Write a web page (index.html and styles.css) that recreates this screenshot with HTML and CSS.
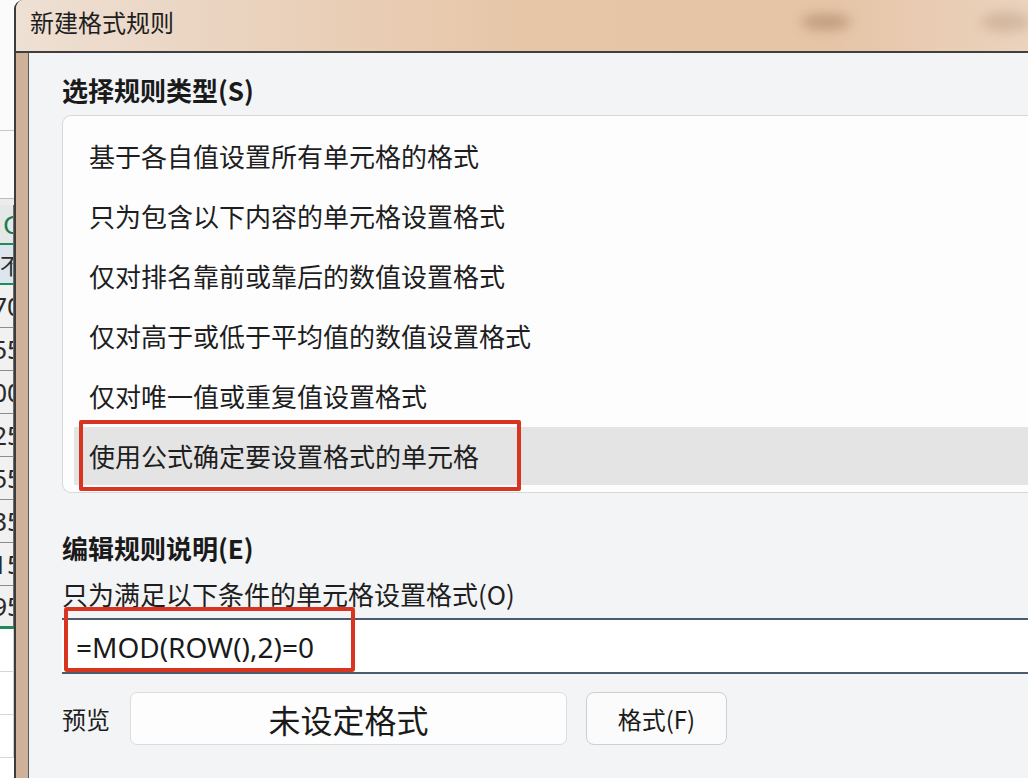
FILE: index.html
```html
<!DOCTYPE html>
<html lang="zh-CN">
<head>
<meta charset="utf-8">
<title>新建格式规则</title>
<link rel="stylesheet" href="styles.css">
</head>
<body>
<div class="screen">
  <div class="sheet">
    <div class="sheet-blank b1"></div>
    <div class="sheet-blank b2"></div>
    <div class="sheet-blank b3"></div>
    <div class="cell head"><span>G</span></div>
    <div class="cell sel"><span>不</span></div>
    <div class="cell"><span>70</span></div>
    <div class="cell"><span>55</span></div>
    <div class="cell"><span>00</span></div>
    <div class="cell"><span>25</span></div>
    <div class="cell"><span>55</span></div>
    <div class="cell"><span>35</span></div>
    <div class="cell"><span>15</span></div>
    <div class="cell last"><span>95</span></div>
    <div class="cell empty"></div>
    <div class="cell empty"></div>
    <div class="cell empty"></div>
  </div>
  <div class="window">
    <div class="titlebar">
      <span class="title">新建格式规则</span>
      <span class="blur blur1"></span>
      <span class="blur blur2"></span>
    </div>
    <div class="frame">
      <div class="dialog">
        <div class="section-title">选择规则类型(S)</div>
        <div class="rule-list">
          <div class="rule">基于各自值设置所有单元格的格式</div>
          <div class="rule">只为包含以下内容的单元格设置格式</div>
          <div class="rule">仅对排名靠前或靠后的数值设置格式</div>
          <div class="rule">仅对高于或低于平均值的数值设置格式</div>
          <div class="rule">仅对唯一值或重复值设置格式</div>
          <div class="rule selected"><span class="mark">使用公式确定要设置格式的单元格</span></div>
        </div>
        <div class="section-title second">编辑规则说明(E)</div>
        <div class="label">只为满足以下条件的单元格设置格式(O)</div>
        <div class="formula">
          <span class="formula-text">=MOD(ROW(),2)=0</span>
          <span class="formula-mark"></span>
        </div>
        <div class="preview-row">
          <span class="preview-label">预览</span>
          <div class="preview-box">未设定格式</div>
          <button class="fmt-btn">格式(F)</button>
        </div>
      </div>
    </div>
  </div>
</div>
</body>
</html>
```

FILE: styles.css
```css
* { box-sizing: border-box; }
html, body {
  margin: 0;
  padding: 0;
  width: 1028px;
  height: 778px;
  overflow: hidden;
  background: #ffffff;
  font-family: "Noto Sans CJK SC", "Noto Sans", sans-serif;
  color: #1a1a1a;
}
.screen {
  display: flex;
  width: 1028px;
  height: 778px;
}

/* spreadsheet fragment on the far left */
.sheet {
  width: 14px;
  flex: none;
  display: flex;
  flex-direction: column;
  background: #ffffff;
  overflow: hidden;
}
.sheet-blank { border-bottom: 1px solid #c9c9c9; background: #fbfbfb; }
.sheet-blank.b1 { height: 131px; }
.sheet-blank.b2 { height: 68px; border-bottom-color: #bdbdbd; }
.sheet-blank.b3 { height: 6px; border-bottom: none; background: #ececec; }
.cell {
  height: 43px;
  display: flex;
  align-items: center;
  justify-content: flex-end;
  border-bottom: 1px solid #8c8c8c;
  border-right: 1px solid #6c6c6c;
  background: #f1f1f1;
  font-family: "Noto Sans", sans-serif;
  font-size: 26px;
  color: #2a2a2a;
  overflow: hidden;
}
.cell span { margin-right: -9px; white-space: nowrap; }
.cell.head {
  height: 40px;
  background: #e4e8e6;
  color: #1e7a4d;
  border-bottom: 2px solid #1f8a5a;
}
.cell.sel {
  height: 40px;
  background: #dce6ee;
  font-family: "Noto Sans CJK SC", sans-serif;
  font-size: 22px;
  border-bottom: 2px solid #1f8a5a;
}
.cell.last { border-bottom: 3px solid #1f8a5a; }
.cell.empty { background: #ffffff; border-bottom-color: #d6d6d6; border-right-color: #cfcfcf; }

/* dialog window */
.window {
  flex: 1;
  display: flex;
  flex-direction: column;
  border-left: 2px solid #3b3b3b;
  border-top-left-radius: 9px;
  background: #d4b9a2;
  overflow: hidden;
}
.titlebar {
  height: 53px;
  flex: none;
  position: relative;
  display: flex;
  align-items: center;
  padding-left: 14px;
  padding-bottom: 8px;
  background: linear-gradient(90deg, #eee0d4 0%, #ead3bf 22%, #e7c6a8 50%, #e6c4a6 80%, #ebd3be 100%);
  border-bottom: 2px solid #3f3f3f;
}
.title {
  font-size: 24px;
  color: #1e1e1e;
}
.blur {
  position: absolute;
  border-radius: 50%;
  filter: blur(6px);
}
.blur1 { left: 785px; top: 14px; width: 50px; height: 16px; background: rgba(150, 110, 80, 0.45); }
.blur2 { left: 965px; top: 12px; width: 50px; height: 20px; background: rgba(170, 135, 110, 0.35); }

.frame {
  flex: 1;
  display: flex;
  padding-left: 12px;
  background: linear-gradient(90deg, #cfb199 0%, #dcc5b2 50%, #cdb09a 100%);
}
.dialog {
  flex: 1;
  background: #f3f4f6;
  border-left: 1px solid #555a60;
  padding: 19px 0 0 33px;
  display: flex;
  flex-direction: column;
}
.section-title {
  font-size: 26px;
  font-weight: 700;
  line-height: 36px;
  height: 36px;
  color: #1a1a1a;
}
.rule-list {
  margin-top: 7px;
  height: 378px;
  background: #fdfdfe;
  border: 1px solid #d6d8db;
  border-right: none;
  border-radius: 9px 0 0 9px;
  padding: 9px 0 0 0;
  display: flex;
  flex-direction: column;
}
.rule {
  height: 60px;
  display: flex;
  align-items: center;
  padding-left: 26px;
  font-size: 26px;
  color: #1e1e1e;
}
.rule.selected {
  margin-left: 11px;
  padding-left: 5px;
  height: 58px;
  margin-top: 2px;
  background: #e4e4e5;
}
.mark {
  display: flex;
  align-items: center;
  height: 71px;
  margin: -7px 0 -6px 0;
  padding: 0 6px 0 6px;
  width: 442px;
  border: 4px solid #d9341f;
  border-radius: 2px;
}
.section-title.second { margin-top: 37px; }
.label {
  margin-top: 10px;
  font-size: 26px;
  line-height: 36px;
  height: 36px;
  color: #1e1e1e;
}
.formula {
  position: relative;
  margin-top: 6px;
  height: 56px;
  background: #ffffff;
  border-top: 2px solid #4a5b6f;
  border-bottom: 2px solid #4a5b6f;
  display: flex;
  align-items: center;
  padding-left: 14px;
}
.formula-text {
  font-family: "Noto Sans", sans-serif;
  font-size: 28px;
  color: #1a1a1a;
  padding-top: 2px;
}
.formula-mark {
  position: absolute;
  left: 2px;
  top: -13px;
  width: 291px;
  height: 65px;
  border: 4px solid #d9341f;
  border-radius: 3px;
}
.preview-row {
  margin-top: 18px;
  display: flex;
  align-items: center;
  height: 53px;
}
.preview-label {
  font-size: 24px;
  width: 68px;
  color: #1e1e1e;
}
.preview-box {
  width: 437px;
  height: 53px;
  background: #fdfdfd;
  border: 1px solid #dcdcdc;
  border-radius: 7px;
  display: flex;
  align-items: center;
  justify-content: center;
  font-size: 32px;
  color: #1a1a1a;
}
.fmt-btn {
  margin-left: 19px;
  width: 141px;
  height: 53px;
  background: #fbfbfb;
  border: 1px solid #cfcfcf;
  border-radius: 8px;
  font-family: "Noto Sans CJK SC", sans-serif;
  font-size: 24px;
  color: #1a1a1a;
  padding: 0;
}
```
